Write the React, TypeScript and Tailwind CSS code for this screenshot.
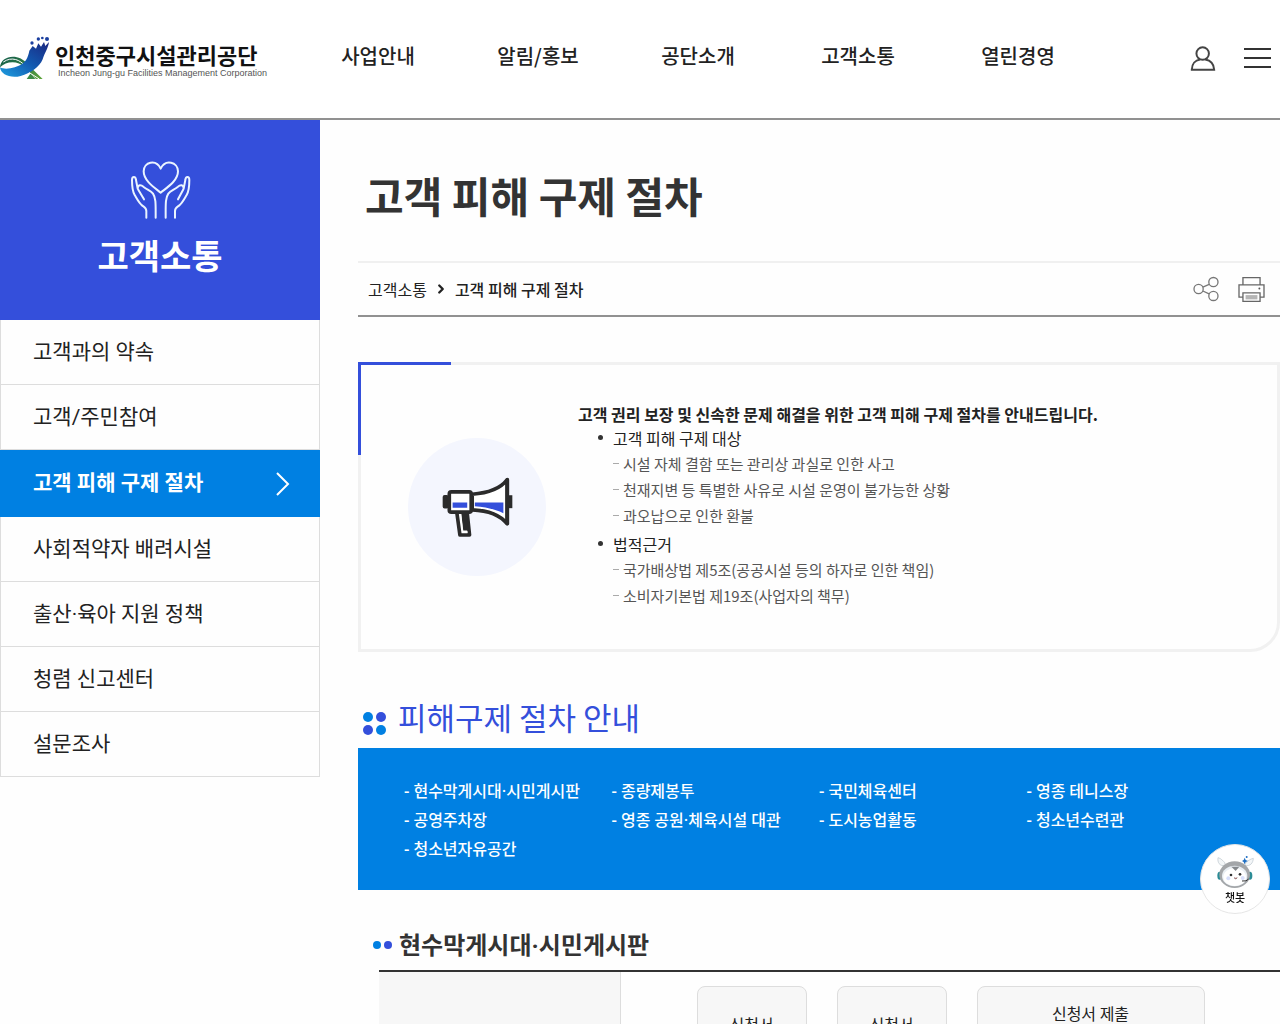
import { ChevronRight } from "lucide-react"

const topMenu = ["사업안내", "알림/홍보", "공단소개", "고객소통", "열린경영"]

const sideMenu = [
  "고객과의 약속",
  "고객/주민참여",
  "고객 피해 구제 절차",
  "사회적약자 배려시설",
  "출산·육아 지원 정책",
  "청렴 신고센터",
  "설문조사",
]

const guide = [
  {
    title: "고객 피해 구제 대상",
    items: [
      "시설 자체 결함 또는 관리상 과실로 인한 사고",
      "천재지변 등 특별한 사유로 시설 운영이 불가능한 상황",
      "과오납으로 인한 환불",
    ],
  },
  {
    title: "법적근거",
    items: ["국가배상법 제5조(공공시설 등의 하자로 인한 책임)", "소비자기본법 제19조(사업자의 책무)"],
  },
]

const facilities = [
  "현수막게시대·시민게시판",
  "종량제봉투",
  "국민체육센터",
  "영종 테니스장",
  "공영주차장",
  "영종 공원·체육시설 대관",
  "도시농업활동",
  "청소년수련관",
  "청소년자유공간",
]

function Logo() {
  return (
    <svg viewBox="0 45 150 135" className="h-[45px] w-[50px] shrink-0" aria-hidden="true">
      <defs>
        <linearGradient id="wing" x1="1" y1="0" x2="0" y2="1">
          <stop offset="0" stopColor="#1b2680" />
          <stop offset="0.5" stopColor="#1259b0" />
          <stop offset="1" stopColor="#1f9fe0" />
        </linearGradient>
        <linearGradient id="leaf" x1="0" y1="0" x2="1" y2="1">
          <stop offset="0" stopColor="#0f5a4c" />
          <stop offset="1" stopColor="#5fa53a" />
        </linearGradient>
      </defs>
      <path d="M0 142C2 108 54 96 84 134L128 177H108L74 142C52 120 18 124 0 142Z" fill="url(#leaf)" />
      <path d="M10 126C36 108 60 120 76 138" fill="none" stroke="#fff" strokeWidth="3" />
      <path d="M80 177L92 160L106 177Z" fill="#3c8b45" />
      <path
        d="M0 142C2 164 32 176 62 168C92 160 118 142 128 118C134 98 144 86 147 66L136 78L132 66L123 80L115 70L108 86L98 78L88 92C84 112 78 124 66 132C50 142 18 152 0 142Z"
        fill="url(#wing)"
      />
      <path d="M88 158L118 177" stroke="#fefefe" strokeWidth="3" />
      <g fill="#1b3f9f">
        <circle cx="96" cy="69" r="5" />
        <circle cx="115" cy="57" r="5" />
        <circle cx="127" cy="54" r="4" />
        <circle cx="141" cy="57" r="6" />
      </g>
    </svg>
  )
}

function UserIcon() {
  return (
    <svg viewBox="92 44 78 76" className="h-[25px] w-[26px]" fill="none" stroke="#444" strokeWidth="6">
      <circle cx="130" cy="67" r="19" />
      <path d="M97 116C97 98 108 87 122 85M138 85C154 88 164 98 165 116H94" />
    </svg>
  )
}

function HandsIcon() {
  return (
    <svg
      viewBox="150 60 183 177"
      className="h-[59px] w-[61px]"
      fill="none"
      stroke="#eaf4ff"
      strokeWidth="6"
      strokeLinecap="round"
      strokeLinejoin="round"
      aria-hidden="true"
    >
      <path d="M242 158C222 142 191 122 191 94C191 66 228 56 242 86C256 56 294 66 294 94C294 122 262 142 242 158Z" />
      <path d="M199 233V213C199 203 194 202 186 196C178 190 174 182 164 165C157 153 156 138 156 120C156 108 167 108 168 120L173 146L192 178M173 146C173 132 184 134 190 140C202 150 212 152 219 161C228 174 227 192 227 233" />
      <path d="M285 233V213C285 203 290 202 298 196C306 190 310 182 320 165C327 153 328 138 328 120C328 108 317 108 316 120L311 146L294 178M311 146C311 132 300 134 294 140C282 150 272 152 265 161C256 174 257 192 257 233" />
    </svg>
  )
}

function ShareIcon() {
  return (
    <svg viewBox="40 61 79 78" className="h-[26px] w-[26px]" fill="none" stroke="#777" strokeWidth="4">
      <circle cx="57" cy="100" r="14" />
      <circle cx="102" cy="79" r="14" />
      <circle cx="102" cy="121" r="14" />
      <path d="M70 94L89 86M70 106L89 115" />
    </svg>
  )
}

function PrintIcon() {
  return (
    <svg viewBox="176 62 80 76" className="h-[25px] w-[27px]" fill="none" stroke="#666" strokeWidth="4">
      <path d="M190 86V64H242V86M190 123H178V86H254V123H242" />
      <path d="M190 110H242V136H190Z" />
      <path d="M198 117H234V130H198Z" fill="#b5b5b5" stroke="none" />
      <circle cx="240" cy="97" r="3" fill="#555" stroke="none" />
    </svg>
  )
}

function Megaphone() {
  return (
    <svg viewBox="274 380 214 182" className="h-[61px] w-[71px]" fill="none" stroke="#2b2b2b" strokeWidth="11" strokeLinejoin="round" aria-hidden="true">
      <rect x="279" y="436" width="12" height="35" rx="3" fill="#2b2b2b" strokeWidth="6" />
      <path d="M319 488L328 554H357L350 488" fill="#fff" />
      <path d="M332 488L338 540H354L348 488Z" fill="#2b2b2b" stroke="none" />
      <path d="M330 490L336 545H352" stroke="#fff" strokeWidth="3" />
      <path d="M365 431C410 428 450 414 470 388V520C450 494 410 480 365 478Z" fill="#fff" />
      <path d="M471 387V520" strokeLinecap="round" />
      <rect x="296" y="424" width="66" height="61" rx="6" fill="#fff" />
      <path d="M306 456H350V472H306ZM373 456H459V488C434 476 404 469 373 467Z" fill="#344fdb" stroke="none" />
      <path d="M476 434H486V473H476Z" fill="#2b2b2b" stroke="none" />
    </svg>
  )
}

function BotIcon() {
  return (
    <svg viewBox="106 74 114 102" className="h-[34px] w-[38px]" aria-hidden="true">
      <path d="M134 106C116 108 110 96 112 82C122 84 126 92 132 96ZM192 106C210 108 217 98 218 84C208 86 202 92 196 96Z" fill="#f3f6f8" stroke="#b9c4cb" strokeWidth="2" />
      <ellipse cx="117" cy="136" rx="7" ry="12" fill="#2b8c96" />
      <ellipse cx="208" cy="136" rx="7" ry="12" fill="#2b8c96" />
      <ellipse cx="162" cy="133" rx="46" ry="40" fill="#a3a6a9" />
      <ellipse cx="162" cy="137" rx="38" ry="31" fill="#e9eef3" />
      <ellipse cx="162" cy="140" rx="34" ry="27" fill="#fff" />
      <path d="M152 109H176L165 122Z" fill="#85898d" />
      <circle cx="151" cy="134" r="4" fill="#333" />
      <circle cx="178" cy="132" r="4" fill="#333" />
      <path d="M160 142Q165 149 170 142" fill="#d77" stroke="#555" strokeWidth="2" />
      <circle cx="143" cy="144" r="6" fill="#d6defa" />
      <circle cx="186" cy="143" r="6" fill="#d6defa" />
      <path d="M204 146Q198 154 184 152" fill="none" stroke="#333" strokeWidth="3" />
      <path d="M192 82L195 89L202 92L195 95L192 102L189 95L184 92L189 89Z" fill="#1f6fc4" />
      <circle cx="198" cy="80" r="3" fill="#1f6fc4" />
    </svg>
  )
}

function Header() {
  return (
    <header className="flex h-[120px] border-b-2 border-[#919191] bg-white">
      <a href="#" className="mt-[35px] flex w-[298px] shrink-0 items-start">
        <Logo />
        <span className="ml-[5px] mt-[6px] block whitespace-nowrap">
          <strong className="block text-[22px] font-bold leading-[26px] text-[#111]">인천중구시설관리공단</strong>
          <span className="ml-[3px] block font-['Liberation_Sans',sans-serif] text-[9px] leading-3 text-[#555]">
            Incheon Jung-gu Facilities Management Corporation
          </span>
        </span>
      </a>
      <nav className="grid max-w-[800px] flex-1 grid-cols-5 pt-[42px]">
        {topMenu.map((name) => (
          <a key={name} href="#" className="text-center text-[20px] font-medium leading-7 text-[#222]">
            {name}
          </a>
        ))}
      </nav>
      <div className="ml-auto flex h-[116px] items-center gap-7 pr-[9px]">
        <button type="button" aria-label="로그인">
          <UserIcon />
        </button>
        <button type="button" aria-label="전체메뉴" className="flex w-[27px] flex-col gap-[7px]">
          <span className="h-[2px] w-full bg-[#333]" />
          <span className="h-[2px] w-full bg-[#333]" />
          <span className="h-[2px] w-full bg-[#333]" />
        </button>
      </div>
    </header>
  )
}

function SideMenu() {
  return (
    <aside className="w-[320px] shrink-0">
      <div className="flex h-[200px] flex-col items-center bg-[#344fdb] pt-10">
        <HandsIcon />
        <h2 className="mt-[11px] text-[34px] font-bold leading-[50px] text-white">고객소통</h2>
      </div>
      <ul className="font-[Roboto,'Noto_Sans_CJK_KR',sans-serif] text-[21px]">
        {sideMenu.map((name, i) => (
          <li key={name}>
            {i === 2 ? (
              <a
                href="#"
                aria-current="page"
                className="flex h-[67px] items-center justify-between bg-[#0080e2] pl-[33px] pr-[30px] font-bold text-white"
              >
                {name}
                <svg viewBox="0 0 14 24" className="h-6 w-[14px]" fill="none" stroke="currentColor" strokeWidth="2">
                  <path d="M1 1L12 12L1 23" />
                </svg>
              </a>
            ) : (
              <a href="#" className="flex h-[65px] items-center border-x border-b border-[#ddd] pl-8 pt-[2px] text-[#222]">
                {name}
              </a>
            )}
          </li>
        ))}
      </ul>
    </aside>
  )
}

function GuideBox() {
  return (
    <section className="relative mt-[45px] flex h-[290px] items-center rounded-br-[30px] border-[3px] border-[#f1f1f1] pl-[47px]">
      <span className="absolute -left-[3px] -top-[3px] size-[93px] border-l-[3px] border-t-[3px] border-[#344fdb]" />
      <div className="flex size-[138px] shrink-0 items-center justify-center rounded-full bg-[#f4f6fe]">
        <Megaphone />
      </div>
      <div className="ml-8 pb-[3px]">
        <p className="text-base font-bold leading-[22px] text-[#222]">
          고객 권리 보장 및 신속한 문제 해결을 위한 고객 피해 구제 절차를 안내드립니다.
        </p>
        <ul className="flex flex-col gap-[2px] pl-5">
          {guide.map((group) => (
            <li key={group.title}>
              <div className="flex items-center gap-[10px] text-base leading-[26px] text-[#222]">
                <span className="size-[5px] rounded-full bg-[#333]" />
                {group.title}
              </div>
              <ul className="pl-[15px]">
                {group.items.map((item) => (
                  <li key={item} className="flex items-center gap-1 text-[15px] leading-[26px] text-[#555]">
                    <span className="h-px w-[6px] bg-[#aaa]" />
                    {item}
                  </li>
                ))}
              </ul>
            </li>
          ))}
        </ul>
      </div>
    </section>
  )
}

function Procedure() {
  return (
    <section className="mt-[42px]">
      <div className="flex h-[54px] items-center pb-2 pl-[5px]">
        <span className="mt-3 grid grid-cols-2 gap-[3px]">
          <span className="size-[10px] rounded-full bg-[#0080e2]" />
          <span className="size-[10px] rounded-full bg-[#344fdb]" />
          <span className="size-[10px] rounded-full bg-[#344fdb]" />
          <span className="size-[10px] rounded-full bg-[#0080e2]" />
        </span>
        <h2 className="ml-3 text-[31px] leading-[46px] text-[#344fdb]">피해구제 절차 안내</h2>
      </div>
      <ul className="grid grid-cols-4 bg-[#0080e2] px-[46px] pb-[26px] pt-[29px] font-[Roboto,'Noto_Sans_CJK_KR',sans-serif] text-base font-medium leading-[29px] text-white">
        {facilities.map((name) => (
          <li key={name} className="whitespace-nowrap">
            <a href="#">- {name}</a>
          </li>
        ))}
      </ul>
    </section>
  )
}

function BoardSteps() {
  return (
    <section className="mt-9 pl-[15px]">
      <div className="flex items-center">
        <span className="flex gap-[3px]">
          <span className="size-2 rounded-full bg-[#0080e2]" />
          <span className="size-2 rounded-full bg-[#344fdb]" />
        </span>
        <h3 className="ml-[7px] pt-[2px] font-[Roboto,'Noto_Sans_CJK_KR',sans-serif] text-2xl font-bold leading-9 text-[#333]">
          현수막게시대·시민게시판
        </h3>
      </div>
      <table className="ml-[6px] mt-[6px] w-[calc(100%-6px)] border-t-2 border-[#333] text-base text-[#222]">
        <tbody>
          <tr>
            <th className="w-[241px] border-r border-[#ddd] bg-[#f7f7f7]" />
            <td className="pb-4 pl-[76px] pt-[14px]">
              <ol className="flex gap-[30px] text-center leading-[26px]">
                <li className="flex h-[76px] w-[110px] items-center justify-center rounded-lg border border-[#ddd] bg-[#f7f7f7]">
                  신청서
                </li>
                <li className="flex h-[76px] w-[110px] items-center justify-center rounded-lg border border-[#ddd] bg-[#f7f7f7]">
                  신청서
                </li>
                <li className="h-[76px] w-[228px] rounded-lg border border-[#ddd] bg-[#f7f7f7] pt-[13px]">신청서 제출</li>
              </ol>
            </td>
          </tr>
        </tbody>
      </table>
    </section>
  )
}

export default function App() {
  return (
    <div className="min-h-screen bg-[#fefefe] font-['Noto_Sans_CJK_KR',sans-serif]">
      <Header />
      <div className="flex">
        <SideMenu />
        <main className="ml-[38px] min-w-0 flex-1">
          <h1 className="pb-9 pl-[7px] pt-[45px] text-[42px] font-bold leading-[60px] text-[#333]">고객 피해 구제 절차</h1>
          <div className="flex h-14 items-center justify-between border-b-2 border-t-2 border-b-[#919191] border-t-[#f0f0f0] pl-[10px] pr-[15px]">
            <nav className="flex items-center gap-[7px] text-base text-[#222]">
              <a href="#">고객소통</a>
              <ChevronRight className="size-[14px]" strokeWidth={4} />
              <a href="#" className="font-medium">
                고객 피해 구제 절차
              </a>
            </nav>
            <div className="flex items-center gap-[19px]">
              <button type="button" aria-label="공유">
                <ShareIcon />
              </button>
              <button type="button" aria-label="인쇄">
                <PrintIcon />
              </button>
            </div>
          </div>
          <GuideBox />
          <Procedure />
          <BoardSteps />
        </main>
      </div>
      <button
        type="button"
        className="fixed bottom-[110px] right-[10px] flex size-[70px] flex-col items-center rounded-full border border-[#e5e5e5] bg-white pt-[10px] text-[11px] font-medium leading-4 text-[#111]"
      >
        <BotIcon />
        챗봇
      </button>
    </div>
  )
}
